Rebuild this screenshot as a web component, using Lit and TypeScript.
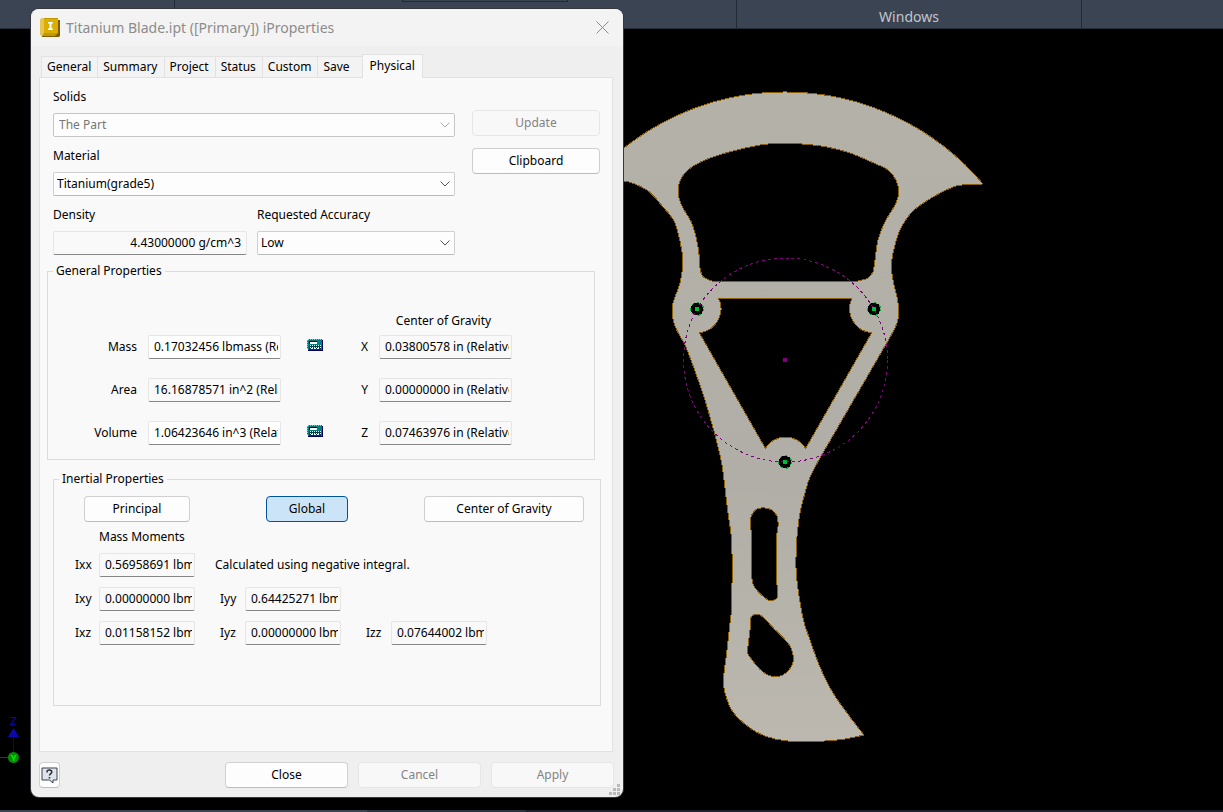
import { LitElement, html, css, svg } from "lit";
import { customElement, property } from "lit/decorators.js";
import { classMap } from "lit/directives/class-map.js";

type Point = [number, number];

/** Smooth curve segments through a list of points, without the leading move. */
function curve(points: Point[]): string {
  let d = "";
  for (let i = 0; i < points.length - 1; i++) {
    const a = points[Math.max(i - 1, 0)];
    const b = points[i];
    const c = points[i + 1];
    const e = points[Math.min(i + 2, points.length - 1)];
    d += `C${b[0] + (c[0] - a[0]) / 6} ${b[1] + (c[1] - a[1]) / 6} ${c[0] - (e[0] - b[0]) / 6} ${c[1] - (e[1] - b[1]) / 6} ${c[0]} ${c[1]}`;
  }
  return d;
}

function loop(points: Point[]): string {
  const closed = [...points, points[0]];
  return `M${points[0][0]} ${points[0][1]}${curve(closed)}Z`;
}

const rightEdge: Point[] = [
  [983, 184], [965, 184.7], [953, 187], [933, 197], [913, 211], [900, 230], [893, 253], [891.5, 267],
  [893, 280], [897, 297], [898.7, 310], [898, 319], [895, 328], [886.7, 343],
];
const neckRight: Point[] = [
  [820, 458], [810, 477], [805, 493], [800, 513], [796.7, 540], [796, 560], [796.7, 578], [802.7, 617],
  [810, 640], [820, 667], [833, 693], [850, 717], [864, 735],
];
const leftEdge: Point[] = [
  [864, 735], [845, 739], [825, 741], [788, 741], [767, 736.7], [750, 728], [733, 712], [725, 693],
  [723.7, 677], [726.7, 653], [730, 623], [731.7, 603], [731.7, 543], [728, 513], [724, 480],
  [721.7, 463], [715, 435], [704, 397], [691.7, 362], [685, 345], [676.7, 330], [672.7, 318],
  [672.7, 305], [675, 297], [680, 283], [682.7, 265], [681.7, 250], [675, 223], [663, 207],
  [646.7, 190], [623, 181], [587, 184],
];
const window1: Point[] = [
  [858, 281], [868, 278], [873, 271.7], [875, 260], [878, 240], [885, 221.7], [895, 205], [898.7, 193],
  [896, 180], [888, 170], [873, 162.7], [850, 153], [826.7, 147], [806.7, 144.3], [786, 143.5],
  [765, 144.3], [736.7, 150], [710, 158], [693.3, 166], [683.3, 175], [678.7, 185], [678.7, 196.7],
  [683, 208], [691.7, 223], [696.7, 240], [699.3, 256.7], [700, 268], [703, 276.7], [711.7, 281],
];
const slot: Point[] = [
  [764, 507.7], [771.7, 510], [777.3, 516.7], [778, 526.7], [776.7, 538], [776.7, 580], [777.7, 596.7],
  [770.7, 600.7], [765, 598], [753, 584], [751.7, 560], [751, 530], [750, 521.7], [751.7, 515], [756.7, 509],
];
const teardrop: Point[] = [
  [757.3, 614.3], [762.7, 616.7], [773.3, 628], [789.3, 645], [793.3, 660], [788, 671], [776.7, 676.7],
  [763, 672], [749, 655.7], [747.7, 650], [750, 630], [751.3, 616.7],
];

const blade = [
  `M587 184A259 259 0 0 1 983 184${curve(rightEdge)}L820 458${curve(neckRight)}${curve(leftEdge)}Z`,
  `M711.7 281H858${curve(window1)}Z`,
  "M718.5 298.3H852A24 24 0 0 0 871.7 332.7L805.7 448.3A24 24 0 0 0 765.3 448.3L699.3 332.7A24 24 0 0 0 718.5 298.3Z",
  loop(slot),
  loop(teardrop),
].join("");

const pivots: Point[] = [[697, 309], [874, 309], [785, 462]];

@customElement("model-view")
class ModelView extends LitElement {
  static styles = css`
    :host { display: block; min-height: 0; background: #000; overflow: hidden; }
    .scene { display: block; width: 100%; height: 100%; }
    .body { fill: url(#metal); stroke: #8a5f06; stroke-width: 1; fill-rule: evenodd; }
    .crisp { shape-rendering: crispEdges; }
    .pivot { fill: #000; stroke: #00b438; stroke-width: 1; stroke-dasharray: 3 3; }
    .pick { fill: #00be32; }
    .sketch { fill: none; stroke: #800080; stroke-width: 1; stroke-dasharray: 3 3; }
    .center { fill: #800080; }
    .axis { font-family: "Noto Sans", sans-serif; font-size: 11px; text-anchor: middle; fill: #0a0ac8; }
    .axis-y { font-size: 9px; font-weight: 700; fill: #00f000; }
  `;

  render() {
    return html`
      <svg class="scene" viewBox="0 29 1223 781" preserveAspectRatio="xMinYMin meet" role="img" aria-label="Blade model">
        <defs>
          <linearGradient id="metal" x1="0" y1="0" x2="0" y2="1">
            <stop offset="0" stop-color="#b4b1a8" />
            <stop offset="0.6" stop-color="#b0aea6" />
            <stop offset="1" stop-color="#bcb8af" />
          </linearGradient>
        </defs>
        <path class="body crisp" d=${blade} />
        ${pivots.map(([x, y]) => svg`<circle class="pivot crisp" cx=${x} cy=${y} r="6.5" />`)}
        <circle class="sketch crisp" cx="785.5" cy="360" r="102" />
        ${pivots.map(([x, y]) => svg`<rect class="pick crisp" x=${x - 2} y=${y - 2} width="4" height="4" />`)}
        <rect class="center crisp" x="783" y="358" width="4" height="4" />
        <path class="crisp" d="M0 757.5H9" stroke="#b40000" />
        <path class="crisp" d="M13.5 737V752" stroke="#0000a0" />
        <path d="M13.5 728L19 737H8Z" fill="#0a0aaa" />
        <text class="axis" x="13.5" y="725">Z</text>
        <circle cx="13.5" cy="757.5" r="5.5" fill="#058c05" />
        <text class="axis axis-y" x="13.5" y="761">Y</text>
      </svg>
    `;
  }
}

@customElement("combo-box")
class ComboBox extends LitElement {
  @property() label = "";
  @property() value = "";
  @property({ type: Boolean }) disabled = false;

  static styles = css`
    :host { display: block; color: #000; }
    .caption { display: block; margin-bottom: 8px; }
    .box { position: relative; display: block; }
    .list {
      appearance: none; display: block; box-sizing: border-box; width: 100%; height: 24px; margin: 0;
      padding: 0 24px 0 3px; border: 1px solid #cfcfcf; border-bottom-color: #bababa; border-radius: 2px;
      background: #fdfdfd; font: inherit; color: #000; outline: none;
    }
    .list:disabled { padding-left: 5px; border-color: #c6c6c6; color: #767676; opacity: 1; }
    .arrow { position: absolute; right: 5px; top: 9px; width: 10px; height: 6px; fill: none; stroke: #505050; pointer-events: none; }
    .off { stroke: #ababab; }
  `;

  render() {
    return html`
      <label class="caption" for="list">${this.label}</label>
      <span class="box">
        <select class="list" id="list" ?disabled=${this.disabled}><option>${this.value}</option></select>
        <svg class=${classMap({ arrow: true, off: this.disabled })} viewBox="0 0 10 6"><path d="M0.5 0.5L5 5L9.5 0.5" /></svg>
      </span>
    `;
  }
}

const tabs = ["General", "Summary", "Project", "Status", "Custom", "Save", "Physical"];

const generalRows = [
  { id: "mass", label: "Mass", value: "0.17032456 lbmass (Relative)", editable: true, axis: "X", cog: "0.03800578 in (Relative)" },
  { id: "area", label: "Area", value: "16.16878571 in^2 (Relative)", editable: false, axis: "Y", cog: "0.00000000 in (Relative)" },
  { id: "volume", label: "Volume", value: "1.06423646 in^3 (Relative)", editable: true, axis: "Z", cog: "0.07463976 in (Relative)" },
];

const moments = [
  [["Ixx", "0.56958691 lbmass"]],
  [["Ixy", "0.00000000 lbmass"], ["Iyy", "0.64425271 lbmass"]],
  [["Ixz", "0.01158152 lbmass"], ["Iyz", "0.00000000 lbmass"], ["Izz", "0.07644002 lbmass"]],
];

@customElement("properties-dialog")
class PropertiesDialog extends LitElement {
  static styles = css`
    :host {
      display: flex; flex-direction: column; box-sizing: border-box; overflow: hidden; border-radius: 8px;
      background: #efefef; box-shadow: 0 0 0 1px #35383c; color: #000;
      font-family: "Noto Sans", sans-serif; font-size: 12px; line-height: 16px;
    }
    .title { display: flex; align-items: center; gap: 6px; height: 37px; padding: 0 14px 0 9px; background: #f3f3f3; color: #8c8c8c; }
    .logo { width: 20px; height: 19px; }
    .name { flex: 1; margin: 0; font-size: 14px; font-weight: 400; line-height: 20px; }
    .close { display: flex; padding: 0; border: 0; background: none; color: #8c8c8c; }
    .cross { width: 13px; height: 13px; fill: none; stroke: currentColor; }

    .tabs { display: flex; align-items: flex-end; height: 31px; padding-left: 10px; }
    .tab {
      box-sizing: border-box; height: 21px; margin: 0; padding: 0 6px 0 5px; border: 1px solid #e2e2e2; border-bottom: 0;
      border-right: 0; background: #f3f3f3; font: inherit; color: #000; white-space: nowrap;
    }
    .save { padding-right: 12px; }
    .active { height: 24px; margin-bottom: -1px; padding: 0 7px 2px; border-right: 1px solid #e2e2e2; background: #f9f9f9; z-index: 1; }

    .panel { flex: 1; margin: 0 10px 0 8px; padding-top: 11px; border: 1px solid #e2e2e2; background: #f9f9f9; }
    .top { display: grid; grid-template-columns: 1fr 128px; column-gap: 17px; padding: 0 12px 0 13px; }
    .fields { display: grid; grid-template-columns: 194px 1fr; column-gap: 10px; row-gap: 11px; }
    .wide { grid-column: 1 / -1; }
    .actions { display: flex; flex-direction: column; gap: 12px; padding-top: 21px; }
    .caption { display: block; margin-bottom: 8px; }

    .btn {
      box-sizing: border-box; height: 26px; margin: 0; padding: 0; border: 1px solid #d0d0d0; border-bottom-color: #bcbcbc;
      border-radius: 4px; background: #fdfdfd; font: inherit; color: #000;
    }
    .btn:disabled { border-color: #e6e6e6; background: #f8f8f8; color: #838383; }
    .pressed { border-color: #005499; background: #cce4f7; }

    .value {
      box-sizing: border-box; width: 100%; min-width: 0; height: 24px; margin: 0; padding: 0 2px 1px 5px;
      border: 1px solid #e6e6e6; border-bottom-color: #868686; border-radius: 2px; background: #f9f9f9; font: inherit; color: #000; outline: none;
    }
    .editable { background: #fff; }
    .right { padding-right: 5px; text-align: right; }

    .group { min-width: 0; box-sizing: border-box; padding: 0; border: 1px solid #dcdcdc; }
    .legend { margin-left: 5px; padding: 0 3px; }
    .general { min-height: 197px; margin: 8px 17px 11px 7px; }
    .inertial { min-height: 235px; margin: 0 11px 0 13px; }
    .cog { display: block; width: 133px; margin: 34px 0 6px 329px; text-align: center; }
    .grid { display: grid; grid-template-columns: 89px 133px 46px 19px 133px; column-gap: 11px; row-gap: 19px; align-items: center; }
    .end { text-align: right; }
    .calc { display: flex; justify-self: center; margin-bottom: 4px; padding: 0; border: 0; background: none; }
    .calc-icon { width: 16px; height: 12px; shape-rendering: crispEdges; }

    .modes { display: flex; justify-content: space-between; padding: 9px 16px 7px 30px; }
    .principal { width: 106px; }
    .global { width: 82px; }
    .gravity { width: 160px; }
    .moments-title { display: block; padding-left: 45px; margin-bottom: 8px; }
    .moments { display: grid; grid-template-columns: 24px 96px 50px 96px 50px 96px; row-gap: 10px; align-items: center; padding-left: 21px; }
    .next { padding-left: 25px; }
    .first { grid-column-start: 1; }
    .note { grid-column: 3 / -1; padding-left: 20px; }

    .footer { display: flex; gap: 10px; padding: 10px 9px 9px 8px; }
    .footer-btn { width: 123px; }
    .help { display: flex; align-items: center; justify-content: center; width: 21px; margin-right: auto; }
    .help-icon { width: 17px; height: 17px; }
    .grip { position: absolute; right: 3px; bottom: 2px; width: 11px; height: 11px; fill: #b9b9b9; shape-rendering: crispEdges; }
  `;

  private calculator(label: string) {
    return html`
      <button class="calc" aria-label=${label}>
        <svg class="calc-icon" viewBox="0 0 16 12">
          <path d="M1 1H16V11L15 12H1Z" fill="#000060" />
          <path d="M0 1L1 0H14L15 1V11H1L0 10Z" fill="#008080" />
          <path d="M1 .5H14M.5 1V10" stroke="#30e8e8" stroke-dasharray="1 1" />
          <path d="M2 6H14V11H2Z" fill="#003c40" />
          <path d="M2 2H10V5H2Z" fill="#000" /><path d="M3 3H10V5H3Z" fill="#fff" />
          <path d="M3 6.5H14M3 8.5H14" stroke="#fff" stroke-dasharray="1 1" />
          <path d="M4 9.5H13" stroke="#e0ffff" stroke-dasharray="2 1" />
        </svg>
      </button>`;
  }

  private moment([label, value]: string[], index: number) {
    return html`
      <label class=${classMap({ first: index === 0, next: index > 0 })} for=${label}>${label}</label>
      <input class="value" id=${label} readonly .value=${value} />`;
  }

  render() {
    return html`
      <header class="title">
        <svg class="logo" viewBox="0 0 20 19">
          <path d="M2 2H20V18L19 19H2Z" fill="#7a6000" />
          <path d="M0 2L2 0H18V15L15 18H2L0 16Z" fill="#c29a00" />
          <path d="M0 2L2 0H4V15L2 18L0 16Z" fill="#e6c458" />
          <path d="M4 1H18V15H4Z" fill="#dcae00" />
          <path d="M8 4H13V5.5H11.5V10.5H13V12H8V10.5H9.5V5.5H8Z" fill="#fff" />
        </svg>
        <h1 class="name">Titanium Blade.ipt ([Primary]) iProperties</h1>
        <button class="close" aria-label="Close window">
          <svg class="cross" viewBox="0 0 13 13"><path d="M0.5 0.5L12.5 12.5M12.5 0.5L0.5 12.5" /></svg>
        </button>
      </header>
      <nav class="tabs" role="tablist">
        ${tabs.map((tab) => html`
          <button role="tab" aria-selected=${tab === "Physical"}
            class=${classMap({ tab: true, save: tab === "Save", active: tab === "Physical" })}>${tab}</button>`)}
      </nav>
      <section class="panel">
        <div class="top">
          <div class="fields">
            <combo-box class="wide" label="Solids" value="The Part" disabled></combo-box>
            <combo-box class="wide" label="Material" value="Titanium(grade5)"></combo-box>
            <div>
              <label class="caption" for="density">Density</label>
              <input class="value right" id="density" readonly .value=${"4.43000000 g/cm^3"} />
            </div>
            <combo-box label="Requested Accuracy" value="Low"></combo-box>
          </div>
          <div class="actions">
            <button class="btn" disabled>Update</button>
            <button class="btn">Clipboard</button>
          </div>
        </div>
        <fieldset class="group general">
          <legend class="legend">General Properties</legend>
          <span class="cog">Center of Gravity</span>
          <div class="grid">
            ${generalRows.map((row) => html`
              <label class="end" for=${row.id}>${row.label}</label>
              <input class=${classMap({ value: true, editable: row.editable })} id=${row.id} ?readonly=${!row.editable} .value=${row.value} />
              ${row.editable ? this.calculator(`${row.label} override`) : html`<span></span>`}
              <label class="end" for=${row.axis}>${row.axis}</label>
              <input class="value" id=${row.axis} readonly .value=${row.cog} />`)}
          </div>
        </fieldset>
        <fieldset class="group inertial">
          <legend class="legend">Inertial Properties</legend>
          <div class="modes">
            <button class="btn principal">Principal</button>
            <button class="btn global pressed" aria-pressed="true">Global</button>
            <button class="btn gravity">Center of Gravity</button>
          </div>
          <span class="moments-title">Mass Moments</span>
          <div class="moments">
            ${moments.map((row, i) => html`
              ${row.map((entry, index) => this.moment(entry, index))}
              ${i === 0 ? html`<span class="note">Calculated using negative integral.</span>` : ""}`)}
          </div>
        </fieldset>
      </section>
      <footer class="footer">
        <button class="btn help" aria-label="Help">
          <svg class="help-icon" viewBox="0 0 17 17">
            <path d="M1 1H16V13H12V16L8.5 13H1Z" fill="#dfe4ec" stroke="#3a404a" />
            <path d="M6 5.5V4.8C6 3.6 7 3 8.3 3S10.8 3.7 10.8 5C10.8 6.7 8.5 6.6 8.5 8.6" fill="none" stroke="#2a2e36" stroke-width="1.5" />
            <path d="M7.7 10H9.3V11.5H7.7Z" fill="#2a2e36" />
          </svg>
        </button>
        <button class="btn footer-btn">Close</button>
        <button class="btn footer-btn" disabled>Cancel</button>
        <button class="btn footer-btn" disabled>Apply</button>
      </footer>
      <svg class="grip" viewBox="0 0 11 11">
        <path d="M8 0H11V3H8ZM8 4H11V7H8ZM8 8H11V11H8ZM4 4H7V7H4ZM4 8H7V11H4ZM0 8H3V11H0Z" />
      </svg>
    `;
  }
}

@customElement("app-root")
class AppRoot extends LitElement {
  static styles = css`
    :host { position: relative; display: grid; grid-template-rows: 29px 1fr 2px; height: 100vh; overflow: hidden; background: #000; }
    .ribbon {
      display: grid; grid-template-columns: 175fr 562fr 345fr 141fr; box-sizing: border-box; border-bottom: 1px solid #242c35;
      background: #3b4453; font-family: "Noto Sans", sans-serif; font-size: 14px; line-height: 33px; color: #c2c6cc; text-align: center;
    }
    .cell { height: 28px; overflow: hidden; border-right: 1px solid #222a34; }
    .last { border-right: 0; }
    .slot { width: 164px; height: 1px; margin-left: 227px; border: 1px solid #222a34; border-top: 0; }
    .status { background: linear-gradient(90deg, #3b4453 0 30%, #2a3440 30% 43%, #1c222c 43%); }
    .dialog { position: absolute; left: 31px; top: 9px; width: 592px; min-height: 788px; }
  `;

  render() {
    return html`
      <header class="ribbon">
        <div class="cell"></div>
        <div class="cell"><div class="slot"></div></div>
        <div class="cell">Windows</div>
        <div class="cell last"></div>
      </header>
      <model-view></model-view>
      <div class="status"></div>
      <properties-dialog class="dialog" role="dialog"></properties-dialog>
    `;
  }
}
